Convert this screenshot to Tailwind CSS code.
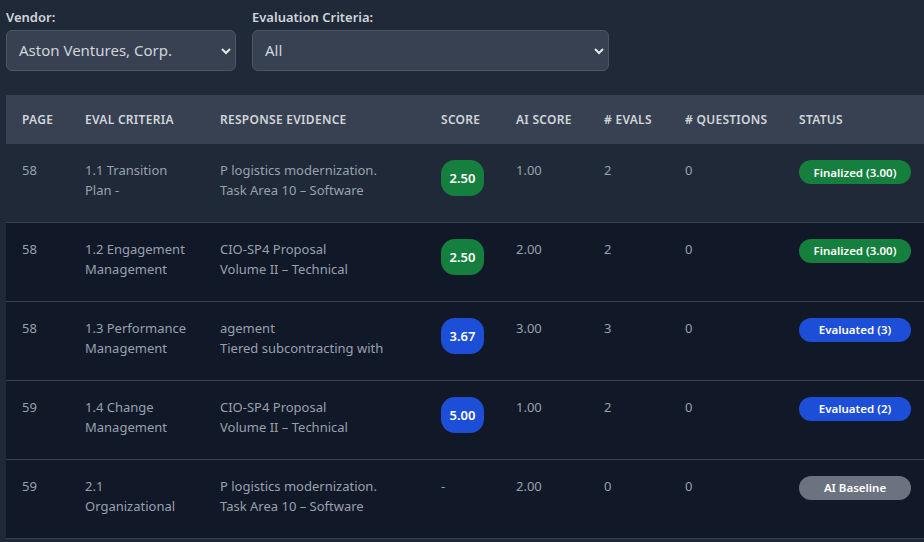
<!DOCTYPE html>
<html lang="en">
<head>
    <meta charset="UTF-8">
    <title>Evaluation Responses</title>
    <script src="https://cdn.jsdelivr.net/npm/@tailwindcss/browser@4"></script>
</head>
<body class="bg-[#1f2937] font-['Noto_Sans',sans-serif] text-gray-200 h-[542px] overflow-hidden">
    <div class="pl-[6px]">
        <!-- filters -->
        <div class="flex gap-4 h-[95px]">
            <div class="w-[230px] pt-[8px]">
                <label class="block text-[13px] leading-[18px] font-semibold text-gray-300 mb-[4px]">Vendor:</label>
                <div class="flex items-center justify-between h-[41px] pl-[12px] pr-[4px] bg-[#374151] border border-[#4b5563] rounded-md text-[15px] text-gray-300">
                    <span>Aston Ventures, Corp.</span>
                    <svg class="w-[10px] h-[10px] text-gray-200" viewBox="0 0 10 10" fill="none" stroke="currentColor" stroke-width="2"><path d="M1 3l4 4 4-4"/></svg>
                </div>
            </div>
            <div class="w-[357px] pt-[8px]">
                <label class="block text-[13px] leading-[18px] font-semibold text-gray-300 mb-[4px]">Evaluation Criteria:</label>
                <div class="flex items-center justify-between h-[41px] pl-[12px] pr-[4px] bg-[#374151] border border-[#4b5563] rounded-md text-[15px] text-gray-300">
                    <span>All</span>
                    <svg class="w-[10px] h-[10px] text-gray-200" viewBox="0 0 10 10" fill="none" stroke="currentColor" stroke-width="2"><path d="M1 3l4 4 4-4"/></svg>
                </div>
            </div>
        </div>

        <!-- table -->
        <table class="w-[918px] table-fixed border-collapse text-[13px] leading-[20px] text-gray-400">
            <colgroup>
                <col class="w-[63px]"><col class="w-[135px]"><col class="w-[221px]"><col class="w-[75px]"><col class="w-[88px]"><col class="w-[81px]"><col class="w-[114px]"><col>
            </colgroup>
            <thead class="bg-[#374151] text-gray-300 text-[12px] font-semibold tracking-[0.28px]">
                <tr class="h-[49px] text-left">
                    <th class="pl-4 font-semibold">PAGE</th>
                    <th class="pl-4 font-semibold">EVAL CRITERIA</th>
                    <th class="pl-4 font-semibold">RESPONSE EVIDENCE</th>
                    <th class="pl-4 font-semibold">SCORE</th>
                    <th class="pl-4 font-semibold">AI SCORE</th>
                    <th class="pl-4 font-semibold"># EVALS</th>
                    <th class="pl-4 font-semibold"># QUESTIONS</th>
                    <th class="pl-4 font-semibold">STATUS</th>
                </tr>
            </thead>
            <tbody>
                <tr class="h-[78px] bg-[#1f2937] border-b border-[#374151] align-top">
                    <td class="pl-4 pt-[16px]">58</td>
                    <td class="pl-4 pt-[16px]">1.1 Transition<br>Plan -</td>
                    <td class="pl-4 pt-[16px]">P logistics modernization.<br>Task Area 10 – Software</td>
                    <td class="pl-4 pt-[16px]"><span class="flex items-center justify-center w-[43px] h-[36px] rounded-[14px] bg-[#15803d] text-white font-semibold">2.50</span></td>
                    <td class="pl-4 pt-[16px]">1.00</td>
                    <td class="pl-4 pt-[16px]">2</td>
                    <td class="pl-4 pt-[16px]">0</td>
                    <td class="pl-4 pt-[16px]"><span class="flex items-center justify-center w-[112px] h-[24px] pt-[1px] rounded-full bg-[#15803d] text-white text-[11.5px] font-semibold">Finalized (3.00)</span></td>
                </tr>
                <tr class="h-[79px] bg-[#111827] border-b border-[#374151] align-top">
                    <td class="pl-4 pt-[16px]">58</td>
                    <td class="pl-4 pt-[16px]">1.2 Engagement<br>Management</td>
                    <td class="pl-4 pt-[16px]">CIO-SP4 Proposal<br>Volume II – Technical</td>
                    <td class="pl-4 pt-[16px]"><span class="flex items-center justify-center w-[43px] h-[36px] rounded-[14px] bg-[#15803d] text-white font-semibold">2.50</span></td>
                    <td class="pl-4 pt-[16px]">2.00</td>
                    <td class="pl-4 pt-[16px]">2</td>
                    <td class="pl-4 pt-[16px]">0</td>
                    <td class="pl-4 pt-[16px]"><span class="flex items-center justify-center w-[112px] h-[24px] pt-[1px] rounded-full bg-[#15803d] text-white text-[11.5px] font-semibold">Finalized (3.00)</span></td>
                </tr>
                <tr class="h-[79px] bg-[#111827] border-b border-[#374151] align-top">
                    <td class="pl-4 pt-[16px]">58</td>
                    <td class="pl-4 pt-[16px]">1.3 Performance<br>Management</td>
                    <td class="pl-4 pt-[16px]">agement<br>Tiered subcontracting with</td>
                    <td class="pl-4 pt-[16px]"><span class="flex items-center justify-center w-[43px] h-[36px] rounded-[14px] bg-[#1d4ed8] text-white font-semibold">3.67</span></td>
                    <td class="pl-4 pt-[16px]">3.00</td>
                    <td class="pl-4 pt-[16px]">3</td>
                    <td class="pl-4 pt-[16px]">0</td>
                    <td class="pl-4 pt-[16px]"><span class="flex items-center justify-center w-[112px] h-[24px] pt-[1px] rounded-full bg-[#1d4ed8] text-white text-[11.5px] font-semibold">Evaluated (3)</span></td>
                </tr>
                <tr class="h-[79px] bg-[#111827] border-b border-[#374151] align-top">
                    <td class="pl-4 pt-[16px]">59</td>
                    <td class="pl-4 pt-[16px]">1.4 Change<br>Management</td>
                    <td class="pl-4 pt-[16px]">CIO-SP4 Proposal<br>Volume II – Technical</td>
                    <td class="pl-4 pt-[16px]"><span class="flex items-center justify-center w-[43px] h-[36px] rounded-[14px] bg-[#1d4ed8] text-white font-semibold">5.00</span></td>
                    <td class="pl-4 pt-[16px]">1.00</td>
                    <td class="pl-4 pt-[16px]">2</td>
                    <td class="pl-4 pt-[16px]">0</td>
                    <td class="pl-4 pt-[16px]"><span class="flex items-center justify-center w-[112px] h-[24px] pt-[1px] rounded-full bg-[#1d4ed8] text-white text-[11.5px] font-semibold">Evaluated (2)</span></td>
                </tr>
                <tr class="h-[79px] bg-[#111827] border-b border-[#374151] align-top">
                    <td class="pl-4 pt-[16px]">59</td>
                    <td class="pl-4 pt-[16px]">2.1<br>Organizational</td>
                    <td class="pl-4 pt-[16px]">P logistics modernization.<br>Task Area 10 – Software</td>
                    <td class="pl-4 pt-[16px]">-</td>
                    <td class="pl-4 pt-[16px]">2.00</td>
                    <td class="pl-4 pt-[16px]">0</td>
                    <td class="pl-4 pt-[16px]">0</td>
                    <td class="pl-4 pt-[16px]"><span class="flex items-center justify-center w-[112px] h-[24px] pt-[1px] rounded-full bg-[#6b7280] text-white text-[11.5px] font-semibold">AI Baseline</span></td>
                </tr>
            </tbody>
        </table>
    </div>
</body>
</html>
